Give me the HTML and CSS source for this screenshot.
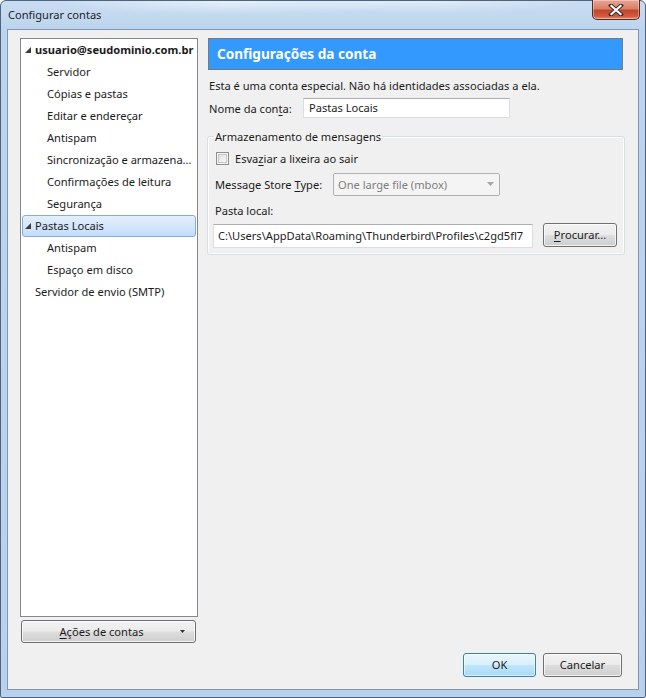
FILE: index.html
```html
<!DOCTYPE html>
<html lang="pt">
<head>
<meta charset="utf-8">
<title>Configurar contas</title>
<link rel="stylesheet" href="styles.css">
</head>
<body>
<div class="window">
  <div class="titlebar">
    <span class="title">Configurar contas</span>
    <div class="close-btn">
      <svg width="16" height="12" viewBox="0 0 16 12">
        <path d="M3 1.5 L13 10.5 M13 1.5 L3 10.5" stroke="#3b2a2a" stroke-width="4" stroke-linecap="square"/>
        <path d="M3.5 2 L12.5 10 M12.5 2 L3.5 10" stroke="#ffffff" stroke-width="2.2" stroke-linecap="square"/>
      </svg>
    </div>
  </div>
  <div class="client">
    <div class="main">
      <div class="left">
        <div class="tree">
          <div class="row top bold"><span class="twisty"><svg width="6" height="6" viewBox="0 0 6 6"><polygon points="6,0 6,6 0,6" fill="#3c3c3c"/></svg></span>usuario@seudominio.com.br</div>
          <div class="row child">Servidor</div>
          <div class="row child">Cópias e pastas</div>
          <div class="row child">Editar e endereçar</div>
          <div class="row child">Antispam</div>
          <div class="row child">Sincronização e armazena...</div>
          <div class="row child">Confirmações de leitura</div>
          <div class="row child">Segurança</div>
          <div class="row top selected"><span class="twisty"><svg width="6" height="6" viewBox="0 0 6 6"><polygon points="6,0 6,6 0,6" fill="#3c3c3c"/></svg></span>Pastas Locais</div>
          <div class="row child">Antispam</div>
          <div class="row child">Espaço em disco</div>
          <div class="row top">Servidor de envio (SMTP)</div>
        </div>
        <div class="btn actions-btn"><span class="actions-label"><u>A</u>ções de contas</span><span class="dropmark"><svg width="5" height="3" viewBox="0 0 5 3"><polygon points="0,0 5,0 2.5,3" fill="#333"/></svg></span></div>
      </div>
      <div class="right">
        <div class="header">Configurações da conta</div>
        <div class="line intro">Esta é uma conta especial. Não há identidades associadas a ela.</div>
        <div class="line name-row">
          <span class="name-label">Nome da con<u>t</u>a:</span>
          <div class="textbox name-box">Pastas Locais</div>
        </div>
        <fieldset class="group">
          <legend>Armazenamento de mensagens</legend>
          <div class="check-row"><span class="checkbox"></span><span>Esva<u>z</u>iar a lixeira ao sair</span></div>
          <div class="store-row">
            <span class="store-label">Message Store <u>T</u>ype:</span>
            <div class="select"><span>One large file (mbox)</span><svg width="7" height="4" viewBox="0 0 7 4"><polygon points="0,0 7,0 3.5,4" fill="#a6a6a6"/></svg></div>
          </div>
          <div class="folder-label">Pasta local:</div>
          <div class="path-row">
            <div class="textbox path-box">C:\Users\AppData\Roaming\Thunderbird\Profiles\c2gd5fl7</div>
            <div class="btn browse-btn"><u>P</u>rocurar...</div>
          </div>
        </fieldset>
      </div>
    </div>
    <div class="bottom">
      <div class="btn default ok-btn">OK</div>
      <div class="btn cancel-btn">Cancelar</div>
    </div>
  </div>
</div>
</body>
</html>
```

FILE: styles.css
```css
* { box-sizing: border-box; }
html, body { margin: 0; padding: 0; }
body {
  width: 646px;
  height: 698px;
  font-family: "Noto Sans", "Open Sans", sans-serif;
  font-size: 11.1px;
  color: #1b1b1b;
  background: #ffffff;
}
u { text-decoration: underline; text-underline-offset: 2px; }

.window {
  width: 646px;
  height: 698px;
  border: 1px solid #4d637e;
  border-radius: 6px 6px 2px 2px;
  padding: 0 6px 7px 6px;
  display: flex;
  flex-direction: column;
  background:
    radial-gradient(ellipse 180px 14px at 230px 0px, rgba(255,255,255,0.55), rgba(255,255,255,0) 100%),
    radial-gradient(ellipse 160px 12px at 420px 0px, rgba(255,255,255,0.45), rgba(255,255,255,0) 100%),
    linear-gradient(180deg, #c9ddf2 0px, #bcd4ee 30px, #b9d1ec 100%);
}

.titlebar {
  height: 28px;
  display: flex;
  align-items: flex-start;
}
.title {
  padding-left: 1px;
  margin-top: 6px;
  color: #1e1e1e;
}
.close-btn {
  margin-left: auto;
  margin-right: -1px;
  margin-top: -1px;
  width: 48px;
  height: 20px;
  border: 1px solid #5b2a1f;
  border-top: none;
  border-radius: 0 0 5px 5px;
  background: linear-gradient(180deg, #e8a592 0%, #d8806a 45%, #c2452c 55%, #cf5a3f 85%, #e08f72 100%);
  display: flex;
  align-items: center;
  justify-content: center;
  box-shadow: inset 0 0 0 1px rgba(255,255,255,0.35);
}

.client {
  flex: 1;
  border: 1px solid #8396b0;
  background: #f0f0f0;
  padding: 8px 13px 12px 12px;
  display: flex;
  flex-direction: column;
}

.main {
  height: 605px;
  display: flex;
}

.left {
  width: 178px;
  flex-shrink: 0;
  display: flex;
  flex-direction: column;
  gap: 3px;
}
.tree {
  height: 579px;
  background: #ffffff;
  border: 1px solid #828790;
  padding: 0 1px;
}
.row {
  height: 22px;
  display: flex;
  align-items: center;
  padding-bottom: 2px;
  white-space: nowrap;
  color: #1b1b1b;
  border: 1px solid transparent;
  border-radius: 3px;
}
.row.top { padding-left: 12px; }
.row.child { padding-left: 24px; }
.row.bold { font-weight: bold; }
.twisty {
  width: 0;
  position: relative;
}
.twisty svg {
  position: absolute;
  left: -10px;
  top: -2px;
}
.row.selected {
  border-color: #84acdd;
  background: linear-gradient(180deg, #e4effd 0%, #d5e6fc 50%, #c2dcfd 100%);
}

.btn {
  border: 1px solid #707070;
  border-radius: 3px;
  background: linear-gradient(180deg, #f2f2f2 0%, #ebebeb 48%, #dddddd 52%, #cfcfcf 100%);
  box-shadow: inset 0 0 0 1px rgba(255,255,255,0.7);
  display: flex;
  align-items: center;
  justify-content: center;
  padding-bottom: 1px;
  color: #1b1b1b;
}
.actions-btn {
  height: 23px;
  margin: 0 2px 0 1px;
  position: relative;
}
.actions-label { margin-left: -14px; }
.dropmark {
  position: absolute;
  right: 10px;
  top: 9px;
  display: flex;
}

.right {
  width: 418px;
  flex-shrink: 0;
  margin-left: 9px;
  display: flex;
  flex-direction: column;
}
.header {
  height: 32px;
  margin: 0 2px 0 1px;
  background: #3399ff;
  border: 1px solid #7a7a7a;
  color: #ffffff;
  font-weight: bold;
  font-size: 13.6px;
  padding-left: 8px;
  padding-bottom: 1px;
  display: flex;
  align-items: center;
}
.line {
  display: flex;
  align-items: center;
  padding-left: 2px;
}
.intro {
  height: 16px;
  margin-top: 7px;
}
.name-row {
  height: 20px;
  margin-top: 5px;
}
.name-label { width: 94px; }
.textbox {
  background: #ffffff;
  border: 1px solid #dadde3;
  border-top-color: #abadb3;
  display: flex;
  align-items: center;
  padding-left: 5px;
  padding-bottom: 1px;
  white-space: nowrap;
  overflow: hidden;
  color: #1b1b1b;
}
.name-box {
  width: 207px;
  height: 20px;
}

.group {
  margin: 11px 0 0 0;
  padding: 5px 7px 6px 5px;
  border: 1px solid #d5dfe5;
  border-radius: 3px;
  box-shadow: inset 0 0 0 1px #ffffff;
  min-width: 0;
}
.group legend {
  padding: 0 1px;
  margin-left: 1px;
  color: #1b1b1b;
}
.check-row {
  height: 16px;
  display: flex;
  align-items: center;
  margin-left: 3px;
  margin-top: 1px;
}
.checkbox {
  width: 13px;
  height: 13px;
  border: 1px solid #8e8f8f;
  background: linear-gradient(135deg, #dcdcdc 0%, #f0f0f0 60%, #fbfbfb 100%);
  box-shadow: inset 0 0 0 1px #f4f4f4, inset 0 0 0 2px #c8c8c8;
  margin-right: 6px;
}
.store-row {
  height: 23px;
  margin-top: 7px;
  display: flex;
  align-items: center;
  margin-left: 2px;
}
.store-label { width: 118px; }
.select {
  width: 167px;
  height: 23px;
  border: 1px solid #adb2b5;
  border-radius: 2px;
  background: #f4f4f4;
  color: #7d7d7d;
  display: flex;
  align-items: center;
  justify-content: space-between;
  padding: 0 5px 1px 4px;
}
.folder-label {
  height: 16px;
  margin-top: 6px;
  margin-left: 2px;
  display: flex;
  align-items: center;
}
.path-row {
  margin-top: 5px;
  display: flex;
  align-items: flex-start;
}
.path-box {
  width: 320px;
  height: 24px;
  margin-top: 1px;
  padding-left: 4px;
}
.browse-btn {
  width: 74px;
  height: 24px;
  margin-left: 10px;
}

.bottom {
  margin-top: 10px;
  height: 24px;
  padding-right: 3px;
  display: flex;
  justify-content: flex-end;
  gap: 7px;
}
.ok-btn { width: 73px; height: 24px; }
.cancel-btn { width: 79px; height: 24px; }
.btn.default {
  border-color: #3c7fb1;
  background: linear-gradient(180deg, #eaf6fd 0%, #d9f0fc 48%, #bee6fd 52%, #a7d9f5 100%);
  box-shadow: inset 0 0 0 1px rgba(255,255,255,0.6);
}
```
